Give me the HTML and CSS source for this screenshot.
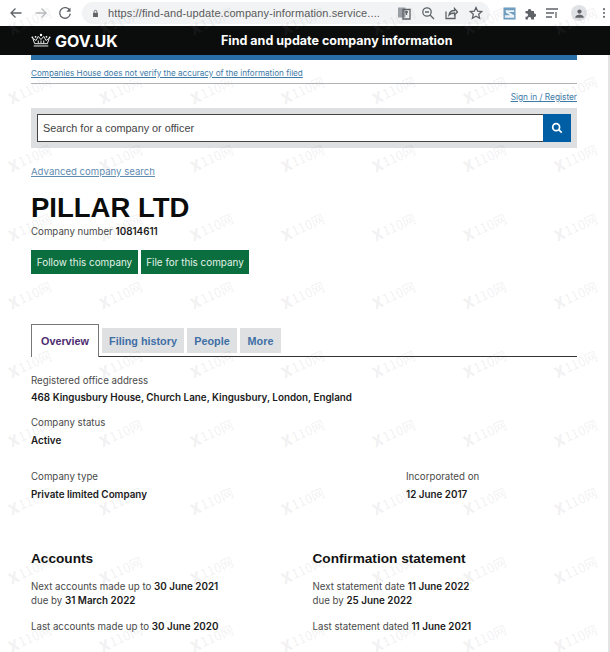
FILE: index.html
```html
<!DOCTYPE html>
<html lang="en">
<head>
<meta charset="utf-8">
<title>PILLAR LTD - Find and update company information</title>
<link rel="stylesheet" href="styles.css">
</head>
<body>
<div class="page">
  <div class="chrome">
    <svg class="ic nav-back" viewBox="0 0 14 14"><path d="M12.5 7H2M6.5 2.5 2 7l4.500 4.500"/></svg>
    <svg class="ic nav-fwd" viewBox="0 0 14 14"><path d="M1.500 7H12M7.500 2.500 12 7l-4.500 4.500"/></svg>
    <svg class="ic nav-reload" viewBox="0 0 14 14"><path d="M11.800 4.600A5.300 5.300 0 1 0 12.300 7.600"/><path class="solid" d="M12.500 1.500v4.200H8.300z"/></svg>
    <div class="omni">
      <svg class="lock" viewBox="0 0 10 12"><path d="M1.500 5h7v6h-7z"/><path class="lock-arc" d="M3 5V3.500a2 2 0 0 1 4 0V5"/></svg>
      <span class="url">https://find-and-update.company-information.service....</span>
      <svg class="ic translate" viewBox="0 0 14 14"><rect x="1" y="1.500" width="7.500" height="10" class="solid-grey"/><path d="M6 3.500h7v9.500H6z"/><path d="M8 6h3M9.500 5v4"/></svg>
      <svg class="ic zoom" viewBox="0 0 14 14"><circle cx="6" cy="6" r="4.200"/><path d="M9 9l4 4M4 6h4"/></svg>
      <svg class="ic share" viewBox="0 0 14 14"><path d="M2 5.500v7h9V9"/><path d="M5 9c.5-3 3-4.500 5.500-4.500V2.500L13.500 6l-3 3V7C8.500 7 6.500 7.500 5 9z"/></svg>
      <svg class="ic star" viewBox="0 0 14 14"><path d="M7 1.500l1.700 3.700 4 .4-3 2.700.9 4L7 10.300l-3.600 2 .9-4-3-2.700 4-.4z"/></svg>
    </div>
    <svg class="ext-s" viewBox="0 0 14 14"><rect x=".5" y=".5" width="13" height="13" fill="#6f9fc0"/><path d="M3 3.500h9v2H6l6 3.500v2.500H2V9h6L3 6z" fill="#eef3f6"/></svg>
    <svg class="ic puzzle" viewBox="0 0 14 14"><path class="solid" d="M1.500 5H4a1.700 1.700 0 1 1 3.300 0H10v2.600a1.700 1.700 0 1 1 0 3.300V13.500H7a1.700 1.700 0 1 0-3 0H1.500v-3a1.700 1.700 0 1 0 0-3z"/></svg>
    <svg class="ic queue" viewBox="0 0 14 14"><path d="M1 3h12M1 7h8M1 11h6M11 6v6"/></svg>
    <span class="avatar"><svg viewBox="0 0 14 14"><circle cx="7" cy="4.500" r="2.700"/><path d="M1.500 12.500c0-3 2.500-4 5.500-4s5.500 1 5.500 4z"/></svg></span>
    <svg class="dots" viewBox="0 0 4 14"><circle cx="2" cy="2.500" r="1.200"/><circle cx="2" cy="7" r="1.200"/><circle cx="2" cy="11.500" r="1.200"/></svg>
  </div>

  <header class="site-header">
    <a class="logo">
      <svg class="crown" viewBox="0 0 22 16"><path d="M3 14h16M4 11.500h14L20 5.500l-3.500 2.500L14 3.500 11 7 8 3.500 5.500 8 2 5.500z"/><path d="M8 8v3M11 8v3M14 8v3"/><circle cx="11" cy="2" r="1.300"/><circle cx="5" cy="4" r="1"/><circle cx="17" cy="4" r="1"/><circle cx="1.500" cy="4.500" r="1"/><circle cx="20.500" cy="4.500" r="1"/></svg>
      <span>GOV.UK</span>
    </a>
    <span class="service">Find and update company information</span>
  </header>

  <main class="main">
    <div class="blue-bar"></div>
    <p class="notice"><a href="#">Companies House does not verify the accuracy of the information filed</a></p>
    <p class="signin"><a href="#">Sign in / Register</a></p>
    <form class="search">
      <div class="search-input">Search for a company or officer</div>
      <div class="search-btn"><svg viewBox="0 0 14 14"><circle cx="6" cy="6" r="4"/><path d="M9 9l3.500 3.500"/></svg></div>
    </form>
    <p class="advanced"><a href="#">Advanced company search</a></p>

    <h1 class="company-name">PILLAR LTD</h1>
    <p class="company-number">Company number <strong>10814611</strong></p>
    <div class="actions">
      <a class="btn btn-follow">Follow this company</a>
      <a class="btn btn-file">File for this company</a>
    </div>

    <nav class="tabs">
      <a class="tab tab-active">Overview</a>
      <a class="tab">Filing history</a>
      <a class="tab">People</a>
      <a class="tab">More</a>
    </nav>

    <dl class="field field-address">
      <dt>Registered office address</dt>
      <dd>468 Kingusbury House, Church Lane, Kingusbury, London, England</dd>
    </dl>
    <dl class="field field-status">
      <dt>Company status</dt>
      <dd>Active</dd>
    </dl>
    <div class="type-row">
      <dl class="field type-col">
        <dt>Company type</dt>
        <dd>Private limited Company</dd>
      </dl>
      <dl class="field">
        <dt>Incorporated on</dt>
        <dd>12 June 2017</dd>
      </dl>
    </div>

    <div class="duo">
      <section>
        <h2>Accounts</h2>
        <p>Next accounts made up to <strong>30 June 2021</strong><br>due by <strong>31 March 2022</strong></p>
        <p>Last accounts made up to <strong>30 June 2020</strong></p>
      </section>
      <section>
        <h2>Confirmation statement</h2>
        <p>Next statement date <strong>11 June 2022</strong><br>due by <strong>25 June 2022</strong></p>
        <p>Last statement dated <strong>11 June 2021</strong></p>
      </section>
    </div>
  </main>

  <div class="scroll-edge"></div>

  <div class="watermarks" aria-hidden="true">
    <span>110网</span><span>110网</span><span>110网</span><span>110网</span><span>110网</span><span>110网</span><span>110网</span>
    <span>110网</span><span>110网</span><span>110网</span><span>110网</span><span>110网</span><span>110网</span><span>110网</span>
    <span>110网</span><span>110网</span><span>110网</span><span>110网</span><span>110网</span><span>110网</span><span>110网</span>
    <span>110网</span><span>110网</span><span>110网</span><span>110网</span><span>110网</span><span>110网</span><span>110网</span>
    <span>110网</span><span>110网</span><span>110网</span><span>110网</span><span>110网</span><span>110网</span><span>110网</span>
    <span>110网</span><span>110网</span><span>110网</span><span>110网</span><span>110网</span><span>110网</span><span>110网</span>
    <span>110网</span><span>110网</span><span>110网</span><span>110网</span><span>110网</span><span>110网</span><span>110网</span>
    <span>110网</span><span>110网</span><span>110网</span><span>110网</span><span>110网</span><span>110网</span><span>110网</span>
    <span>110网</span><span>110网</span><span>110网</span><span>110网</span><span>110网</span><span>110网</span><span>110网</span>
    <span>110网</span><span>110网</span><span>110网</span><span>110网</span><span>110网</span><span>110网</span><span>110网</span>
  </div>
</div>
</body>
</html>
```
FILE: styles.css
```css
* { box-sizing: border-box; }
html, body { margin: 0; padding: 0; height: 652px; overflow: hidden; background: #fff; }
body { font-family: Inter, Lato, sans-serif; color: #4a4a4a; }
p, h1, h2, dl, dd, dt { margin: 0; font-weight: normal; }
a { color: inherit; }
strong { font-weight: 600; font-size: 9.850px; }

.page { position: relative; width: 610px; height: 652px; overflow: hidden; }

/* browser toolbar */
.chrome { display: flex; align-items: center; height: 26px; background: #fff; padding-left: 9px; }
.ic { width: 14px; height: 14px; flex: none; fill: none; stroke: #5f6368; stroke-width: 1.3; }
.ic .solid { fill: #5f6368; stroke: none; }
.ic .solid-grey { fill: #9aa0a6; stroke: none; }
.nav-fwd { stroke: #b9bcc0; margin-left: 11px; }
.nav-reload { margin-left: 10px; }
.omni { display: flex; align-items: center; height: 22px; width: 408px; margin-left: 10px; padding-left: 10px; background: #f1f3f4; border-radius: 11px; flex: none; }
.lock { width: 7px; height: 9px; flex: none; fill: #5f6368; }
.lock-arc { fill: none; stroke: #5f6368; stroke-width: 1.300; }
.url { margin-left: 9px; font: 11px "Liberation Sans", sans-serif; letter-spacing: .01em; color: #5a5a5a; white-space: nowrap; width: 289px; flex: none; }
.zoom { margin-left: 10px; }
.share { margin-left: 9px; }
.star { margin-left: 11px; }
.ext-s { width: 13px; height: 13px; flex: none; margin-left: 13px; }
.puzzle { margin-left: 8px; }
.queue { margin-left: 7px; }
.avatar { width: 16px; height: 16px; margin-left: 12px; border-radius: 50%; background: #dfe1e5; display: flex; align-items: center; justify-content: center; flex: none; }
.avatar svg { width: 11px; height: 11px; fill: #5f6368; }
.dots { width: 4px; height: 12px; margin-left: 15px; flex: none; fill: #5f6368; }

/* GOV.UK header */
.site-header { display: flex; align-items: center; height: 29px; background: #0b0c0c; color: #fff; padding-left: 31px; }
.logo { display: flex; align-items: center; width: 190px; }
.crown { width: 20px; height: 15px; fill: none; stroke: #fff; stroke-width: 1; }
.crown circle { fill: #fff; stroke: none; }
.logo span { margin-left: 4px; font: 700 16px Inter, sans-serif; }
.service { font: 700 12.500px Inter, sans-serif; white-space: nowrap; }

/* main column */
.main { width: 546px; margin-left: 31px; font-size: 9.700px; }
.blue-bar { height: 5px; background: #2a6ea8; }
.notice { height: 24px; padding-top: 7px; border-bottom: 1px solid #b1b4b6; line-height: 13px; font-size: 8.150px; color: #3d7aa8; }
.signin { text-align: right; height: 24px; padding-top: 7px; line-height: 13px; font-size: 8.300px; color: #3d7aa8; }
.search { display: flex; height: 40px; padding: 6px; background: #dedfe0; }
.search-input { flex: 1; height: 28px; padding-left: 5px; background: #fff; border: 1px solid #444; border-right: 0; font: 10.850px/26px "Liberation Sans", sans-serif; color: #444; }
.search-btn { width: 28px; height: 28px; background: #005ea5; display: flex; align-items: center; justify-content: center; }
.search-btn svg { width: 12px; height: 12px; fill: none; stroke: #fff; stroke-width: 2; }
.advanced { margin-top: 17px; line-height: 14px; font-size: 9.600px; color: #5f8bb0; }

.company-name { margin-top: 13px; font: 700 27.500px/31px "Liberation Sans", sans-serif; color: #0b0c0c; }
.company-number { margin-top: 1px; line-height: 14px; }
.company-number strong { color: #1a1a1a; }
.actions { display: flex; gap: 3px; margin-top: 11px; }
.btn { display: block; height: 24px; line-height: 24px; background: #0a6e3e; color: #e2f2e8; font-size: 9.900px; text-align: center; }
.btn-follow { width: 107px; }
.btn-file { width: 108px; }

.tabs { display: flex; align-items: flex-start; gap: 3px; height: 33px; margin-top: 50px; border-bottom: 1px solid #333; font: 700 10.800px "Liberation Sans", sans-serif; color: #3e6fa5; }
.tab { display: flex; align-items: center; justify-content: center; height: 25px; margin-top: 4px; background: #dfe0e2; }
.tab:nth-child(2) { width: 82px; }
.tab:nth-child(3) { width: 50px; }
.tab:nth-child(4) { width: 41px; }
.tab-active { width: 68px; height: 33px; margin-top: 0; background: #fff; border: 1px solid #777; border-bottom: 0; color: #4c2c70; }

.field dt { line-height: 14px; }
.field dd { margin-top: 3px; line-height: 14px; font-size: 9.850px; font-weight: 600; color: #1a1a1a; }
.field-address { margin-top: 17px; }
.field-address dd { margin-top: 2px; }
.field-status { margin-top: 12px; }
.type-row { display: flex; margin-top: 23px; }
.type-col { width: 375px; }

.duo { display: grid; grid-template-columns: 281.500px 1fr; margin-top: 49px; }
.duo h2 { font: 700 13.650px/18px "Liberation Sans", sans-serif; color: #111; }
.duo p { margin-top: 13px; line-height: 13.500px; }
.duo h2 + p { margin-top: 12px; }
.duo strong { color: #1a1a1a; }

.scroll-edge { position: absolute; top: 55px; right: 0; width: 2px; height: 597px; background: #e4e4e4; }

/* repeating photo watermark */
.watermarks { position: absolute; left: -16px; top: -14px; display: grid; grid-template-columns: repeat(7, 91px); grid-auto-rows: 68.600px; pointer-events: none; }
.watermarks span { display: flex; align-items: center; justify-content: center; font: 400 13px "Noto Sans CJK SC", sans-serif; color: rgba(120, 125, 130, .11); transform: rotate(-24deg); white-space: nowrap; }
.watermarks span::before { content: "X"; font-weight: 900; font-size: 15px; margin-right: 1px; }
```
